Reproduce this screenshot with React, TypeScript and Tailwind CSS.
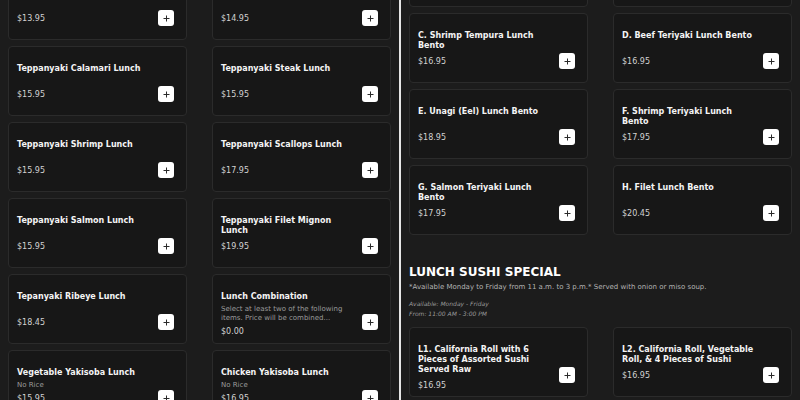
type Item = {
  name: string;
  price: string;
  desc?: string;
};

const lunchLeft: Item[] = [
  { name: "Teppanyaki Chicken Lunch", price: "$13.95" },
  { name: "Teppanyaki Vegetable Lunch", price: "$14.95" },
  { name: "Teppanyaki Calamari Lunch", price: "$15.95" },
  { name: "Teppanyaki Steak Lunch", price: "$15.95" },
  { name: "Teppanyaki Shrimp Lunch", price: "$15.95" },
  { name: "Teppanyaki Scallops Lunch", price: "$17.95" },
  { name: "Teppanyaki Salmon Lunch", price: "$15.95" },
  { name: "Teppanyaki Filet Mignon Lunch", price: "$19.95" },
  { name: "Tepanyaki Ribeye Lunch", price: "$18.45" },
  {
    name: "Lunch Combination",
    price: "$0.00",
    desc: "Select at least two of the following items. Price will be combined...",
  },
  { name: "Vegetable Yakisoba Lunch", price: "$15.95", desc: "No Rice" },
  { name: "Chicken Yakisoba Lunch", price: "$16.95", desc: "No Rice" },
];

const bento: Item[] = [
  { name: "A. Chicken Teriyaki Lunch Bento", price: "$15.95" },
  { name: "B. Tofu Teriyaki Lunch Bento", price: "$14.95" },
  { name: "C. Shrimp Tempura Lunch Bento", price: "$16.95" },
  { name: "D. Beef Teriyaki Lunch Bento", price: "$16.95" },
  { name: "E. Unagi (Eel) Lunch Bento", price: "$18.95" },
  { name: "F. Shrimp Teriyaki Lunch Bento", price: "$17.95" },
  { name: "G. Salmon Teriyaki Lunch Bento", price: "$17.95" },
  { name: "H. Filet Lunch Bento", price: "$20.45" },
];

const sushi: Item[] = [
  { name: "L1. California Roll with 6 Pieces of Assorted Sushi Served Raw", price: "$16.95" },
  { name: "L2. California Roll, Vegetable Roll, & 4 Pieces of Sushi", price: "$16.95" },
];

function AddButton() {
  return (
    <button className="mb-[9px] flex h-[16px] w-[16px] shrink-0 items-center justify-center self-end rounded-[3px] bg-white">
      <svg width="7" height="7" viewBox="0 0 7 7" fill="none">
        <path d="M3.5 0.5v6M0.5 3.5h6" stroke="#2a2a2a" strokeWidth="1" />
      </svg>
    </button>
  );
}

function MenuCard({ item }: { item: Item }) {
  return (
    <div className="flex min-h-[70px] items-start justify-between gap-[6px] rounded-[4px] border border-[#2b2b2b] bg-[#171717] pt-[17px] pr-[12px] pb-[4px] pl-[8px]">
      <div className="flex min-w-0 flex-1 flex-col">
        <h4
          className={
            item.desc
              ? "text-[8px] leading-[10px] font-bold text-[#f4f4f4]"
              : "min-h-[20px] text-[8px] leading-[10px] font-bold text-[#f4f4f4]"
          }
        >
          {item.name}
        </h4>
        {item.desc && (
          <p className="mt-[3px] line-clamp-2 text-[7px] leading-[9px] text-[#9b9b9b]">{item.desc}</p>
        )}
        <p
          className={
            item.desc
              ? "mt-[3px] text-[8px] leading-[12px] text-[#d2d2d2]"
              : "mt-[5px] text-[8px] leading-[12px] text-[#d2d2d2]"
          }
        >
          {item.price}
        </p>
      </div>
      <AddButton />
    </div>
  );
}

function Grid({ items }: { items: Item[] }) {
  return (
    <div className="grid grid-cols-2 gap-x-[25px] gap-y-[6px]">
      {items.map((item) => (
        <MenuCard key={item.name} item={item} />
      ))}
    </div>
  );
}

export default function App() {
  return (
    <div className="flex h-[400px] w-[800px] overflow-hidden bg-[#1c1c1c] font-['DejaVu_Sans',sans-serif]">
      <div className="w-[399px] shrink-0 px-[8px]">
        <div className="-mt-[30px]">
          <Grid items={lunchLeft} />
        </div>
      </div>
      <div className="w-[2px] shrink-0 bg-[#e6e6e6]" />
      <div className="w-[399px] shrink-0 px-[8px]">
        <div className="-mt-[63px]">
          <Grid items={bento} />
          <section className="mt-[29px]">
            <h2 className="text-[12px] leading-[16px] font-bold text-white">LUNCH SUSHI SPECIAL</h2>
            <p className="mt-[2px] text-[7px] leading-[10px] text-[#b3b3b3]">
              *Available Monday to Friday from 11 a.m. to 3 p.m.* Served with onion or miso soup.
            </p>
            <div className="mt-[7px] text-[6px] leading-[10px] text-[#9b9b9b] italic">
              <p>Available: Monday - Friday</p>
              <p>From: 11:00 AM - 3:00 PM</p>
            </div>
          </section>
          <div className="mt-[8px]">
            <Grid items={sushi} />
          </div>
        </div>
      </div>
    </div>
  );
}
